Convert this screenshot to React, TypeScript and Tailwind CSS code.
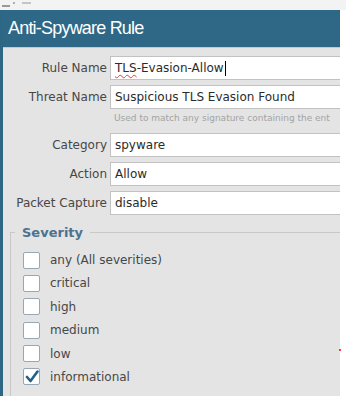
const FONT = { fontFamily: '"DejaVu Sans", Verdana, sans-serif' }

const CAMPOS = [
  { label: 'Rule Name', valor: 'TLS-Evasion-Allow', cursor: true },
  { label: 'Threat Name', valor: 'Suspicious TLS Evasion Found', dica: 'Used to match any signature containing the ent' },
  { label: 'Category', valor: 'spyware' },
  { label: 'Action', valor: 'Allow' },
  { label: 'Packet Capture', valor: 'disable' },
]

const SEVERIDADES = [
  { nome: 'any (All severities)', marcado: false },
  { nome: 'critical', marcado: false },
  { nome: 'high', marcado: false },
  { nome: 'medium', marcado: false },
  { nome: 'low', marcado: false },
  { nome: 'informational', marcado: true },
]

function Caixa({ marcado }: { marcado: boolean }) {
  return (
    <div className="w-[17px] h-[17px] rounded-[2px] border border-[#98a6b5] bg-white flex items-center justify-center shrink-0">
      {marcado && (
        <svg width="14" height="13" viewBox="0 0 14 13">
          <path d="M2 7 L5.5 11 L12.5 1.5" fill="none" stroke="#245f8c" strokeWidth="2.6" strokeLinecap="round" strokeLinejoin="round" />
        </svg>
      )}
    </div>
  )
}

export default function App() {
  return (
    <div className="w-[346px] h-[400px] bg-white overflow-hidden relative" style={FONT}>
      {/* faixa de cima */}
      <div className="h-[10px] bg-[#f3f3f3] flex items-start gap-[3px] pl-[2px] pt-[2px]">
        <div className="w-[8px] h-[2px] bg-[#9a9a9a] mt-[3px]" />
        <div className="w-[2px] h-[2px] bg-[#b0b0b0]" />
        <div className="w-[9px] h-[2px] bg-[#c4c4c4] ml-[4px]" />
      </div>

      <div className="w-[340px] h-[386px] bg-[#e4e4e4] border-l-[3px] border-[#2d6784] flex flex-col overflow-hidden">
        {/* Header */}
        <div className="h-[37px] bg-[#2e6886] flex items-center pl-[5px] shrink-0">
          <span className="text-white text-[18px] tracking-[-0.8px]" style={{ fontFamily: '"Liberation Sans", Arial, sans-serif' }}>
            Anti-Spyware Rule
          </span>
        </div>
        <div className="h-[1px] bg-[#c9c9c9] shrink-0" />

        {/* Campos */}
        <div className="flex flex-col pt-[8px] gap-[5px] shrink-0">
          {CAMPOS.map(c => (
            <div key={c.label} className="flex flex-col">
              <div className="flex items-center h-[24px]">
                <div className="w-[107px] pr-[3px] text-right text-[12px] text-[#474747] shrink-0">{c.label}</div>
                <div className="flex-1 h-[24px] bg-white border border-[#c2c2c2] border-r-0 flex items-center pl-[4px] text-[12px] text-[#2b2b2b] whitespace-nowrap">
                  {c.cursor ? (
                    <>
                      <span className="underline decoration-wavy decoration-[#e0403a] decoration-[1px] underline-offset-[2px]">TLS</span>
                      <span>-Evasion-Allow</span>
                      <span className="w-[1px] h-[15px] bg-black ml-[1px]" />
                    </>
                  ) : c.valor}
                </div>
              </div>
              {c.dica && (
                <div className="pl-[111px] pt-[3px] pb-[2px] text-[9px] text-[#a3a3a3] whitespace-nowrap">{c.dica}</div>
              )}
            </div>
          ))}
        </div>

        {/* Severity */}
        <div className="relative mt-[17px] ml-[7px] flex-1 border-l border-t border-[#c8c8c8] pt-[19px] pl-[12px]">
          <span className="absolute -top-[10px] left-[4px] px-[7px] bg-[#e4e4e4] text-[13px] font-bold text-[#4b7291]">Severity</span>
          <div className="flex flex-col gap-[6.4px]">
            {SEVERIDADES.map(s => (
              <div key={s.nome} className="flex items-center gap-[10px] h-[17px]">
                <Caixa marcado={s.marcado} />
                <span className="text-[12px] text-[#474747]">{s.nome}</span>
              </div>
            ))}
          </div>
        </div>
      </div>

      <div className="absolute left-[339px] top-[349px] w-[2px] h-[2px] bg-[#ff3b30]" />
    </div>
  )
}
